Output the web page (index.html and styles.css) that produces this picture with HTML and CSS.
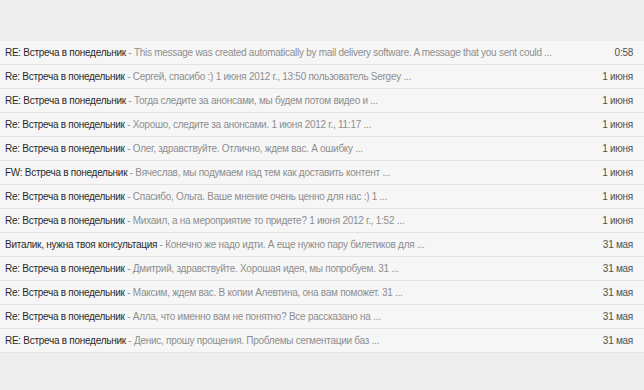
FILE: index.html
```html
<!DOCTYPE html>
<html lang="ru">
<head>
    <meta charset="UTF-8">
    <title>Входящие</title>
    <link rel="stylesheet" href="styles.css">
</head>
<body>

<div class="inbox">
    <div class="msg">
        <div class="text"><span class="subject">RE: Встреча в понедельник</span> - This message was created automatically by mail delivery software. A message that you sent could ...</div>
        <div class="date">0:58</div>
    </div>
    <div class="msg">
        <div class="text"><span class="subject">Re: Встреча в понедельник</span> - Сергей, спасибо :) 1 июня 2012 г., 13:50 пользователь Sergey ...</div>
        <div class="date">1 июня</div>
    </div>
    <div class="msg">
        <div class="text"><span class="subject">RE: Встреча в понедельник</span> - Тогда следите за анонсами, мы будем потом видео и ...</div>
        <div class="date">1 июня</div>
    </div>
    <div class="msg">
        <div class="text"><span class="subject">Re: Встреча в понедельник</span> - Хорошо, следите за анонсами. 1 июня 2012 г., 11:17 ...</div>
        <div class="date">1 июня</div>
    </div>
    <div class="msg">
        <div class="text"><span class="subject">Re: Встреча в понедельник</span> - Олег, здравствуйте. Отлично, ждем вас. А ошибку ...</div>
        <div class="date">1 июня</div>
    </div>
    <div class="msg">
        <div class="text"><span class="subject">FW: Встреча в понедельник</span> - Вячеслав, мы подумаем над тем как доставить контент ...</div>
        <div class="date">1 июня</div>
    </div>
    <div class="msg">
        <div class="text"><span class="subject">Re: Встреча в понедельник</span> - Спасибо, Ольга. Ваше мнение очень ценно для нас :) 1 ...</div>
        <div class="date">1 июня</div>
    </div>
    <div class="msg">
        <div class="text"><span class="subject">Re: Встреча в понедельник</span> - Михаил, а на мероприятие то придете? 1 июня 2012 г., 1:52 ...</div>
        <div class="date">1 июня</div>
    </div>
    <div class="msg">
        <div class="text"><span class="subject">Виталик, нужна твоя консультация</span> - Конечно же надо идти. А еще нужно пару билетиков для ...</div>
        <div class="date">31 мая</div>
    </div>
    <div class="msg">
        <div class="text"><span class="subject">Re: Встреча в понедельник</span> - Дмитрий, здравствуйте. Хорошая идея, мы попробуем. 31 ...</div>
        <div class="date">31 мая</div>
    </div>
    <div class="msg">
        <div class="text"><span class="subject">Re: Встреча в понедельник</span> - Максим, ждем вас. В копии Алевтина, она вам поможет. 31 ...</div>
        <div class="date">31 мая</div>
    </div>
    <div class="msg">
        <div class="text"><span class="subject">Re: Встреча в понедельник</span> - Алла, что именно вам не понятно? Все рассказано на ...</div>
        <div class="date">31 мая</div>
    </div>
    <div class="msg">
        <div class="text"><span class="subject">RE: Встреча в понедельник</span> - Денис, прошу прощения. Проблемы сегментации баз ...</div>
        <div class="date">31 мая</div>
    </div>
</div>

</body>
</html>
```

FILE: styles.css
```css
body {
    font-family: "Liberation Sans", Arial, sans-serif;
    margin: 0;
    padding: 0;
    background-color: #efeeef;
}
.inbox {
    margin-top: 41px;
}
.msg {
    display: flex;
    align-items: center;
    height: 23px;
    padding: 0 11px 0 5px;
    background-color: #f6f6f6;
    border-bottom: 1px solid #e3e3e3;
    font-size: 10px;
    letter-spacing: -0.27px;
}
.text {
    flex: 1;
    color: #8e8e8e;
    white-space: nowrap;
    overflow: hidden;
}
.subject {
    color: #2a2a2a;
}
.date {
    color: #505050;
    margin-left: 10px;
}
```
